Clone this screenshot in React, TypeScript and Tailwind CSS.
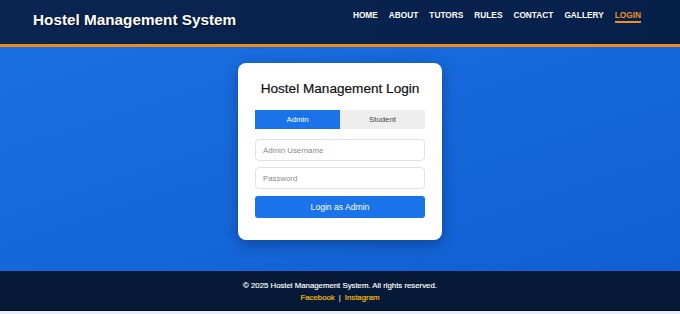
import React, { useState } from 'react';

const navLinks = ['HOME', 'ABOUT', 'TUTORS', 'RULES', 'CONTACT', 'GALLERY', 'LOGIN'];

export default function App() {
  const [role, setRole] = useState<'admin' | 'student'>('admin');

  return (
    <div className="min-h-[314px] bg-[#e9ecf2] font-['Liberation_Sans',Arial,sans-serif]">
      {/* Header */}
      <header className="h-[47px] bg-gradient-to-r from-[#0b2552] to-[#06204a] border-b-[3px] border-[#f08a1c] flex justify-between pl-[33px] pr-[39px]">
        <h1 className="self-center pb-[3px] text-[15.3px] font-bold text-white [text-shadow:1px_1px_2px_rgba(0,0,0,0.6)]">
          Hostel Management System
        </h1>
        <nav className="flex gap-[11px] pt-[10px]">
          {navLinks.map((link) => (
            <a
              key={link}
              href="#"
              className={`h-[13px] text-[8.3px] font-bold leading-[10px] ${
                link === 'LOGIN'
                  ? 'text-[#f0901e] border-b-2 border-[#f0901e]'
                  : 'text-white'
              }`}
            >
              {link}
            </a>
          ))}
        </nav>
      </header>

      {/* Main */}
      <main className="h-[224px] bg-gradient-to-br from-[#1a6fe1] to-[#115fd2] pt-4">
        <div className="mx-auto w-[204px] rounded-lg bg-white px-[17px] pt-[17px] pb-[22px] shadow-[0_4px_14px_rgba(0,0,0,0.3)]">
          <h2 className="text-center text-[13.6px] leading-[18px] text-[#111] [-webkit-text-stroke:0.2px_#111]">
            Hostel Management Login
          </h2>

          <div className="mt-[12px] flex h-[19px]">
            <button
              onClick={() => setRole('admin')}
              className={`flex-1 text-[7.8px] ${
                role === 'admin' ? 'bg-[#1a73e8] text-white' : 'bg-[#eeeeee] text-[#444]'
              }`}
            >
              Admin
            </button>
            <button
              onClick={() => setRole('student')}
              className={`flex-1 text-[7.8px] ${
                role === 'student' ? 'bg-[#1a73e8] text-white' : 'bg-[#eeeeee] text-[#444]'
              }`}
            >
              Student
            </button>
          </div>

          <form className="mt-[10px] flex flex-col" onSubmit={(e) => e.preventDefault()}>
            <input
              type="text"
              placeholder={role === 'admin' ? 'Admin Username' : 'Student Username'}
              className="h-[22px] rounded border border-[#e2e2e2] px-[7px] text-[7.8px] text-[#333] placeholder:text-[#8a8a8a] outline-none"
            />
            <input
              type="password"
              placeholder="Password"
              className="mt-[6px] h-[22px] rounded border border-[#e2e2e2] px-[7px] text-[7.8px] text-[#333] placeholder:text-[#8a8a8a] outline-none"
            />
            <button
              type="submit"
              className="mt-[7px] h-[22px] rounded-[3px] bg-[#1a73e8] text-[8.6px] text-white"
            >
              {role === 'admin' ? 'Login as Admin' : 'Login as Student'}
            </button>
          </form>
        </div>
      </main>

      {/* Footer */}
      <footer className="h-[40px] bg-[#061a37] border-b border-[#020c1c] flex flex-col items-center pt-[9px] text-[7.8px] leading-[12px]">
        <p className="text-white [-webkit-text-stroke:0.15px_#fff]">© 2025 Hostel Management System. All rights reserved.</p>
        <p className="text-white">
          <a href="#" className="text-[#f5b800] [-webkit-text-stroke:0.2px_#f5b800]">Facebook</a>
          <span className="mx-[4px]">|</span>
          <a href="#" className="text-[#f5b800] [-webkit-text-stroke:0.2px_#f5b800]">Instagram</a>
        </p>
      </footer>
    </div>
  );
}
